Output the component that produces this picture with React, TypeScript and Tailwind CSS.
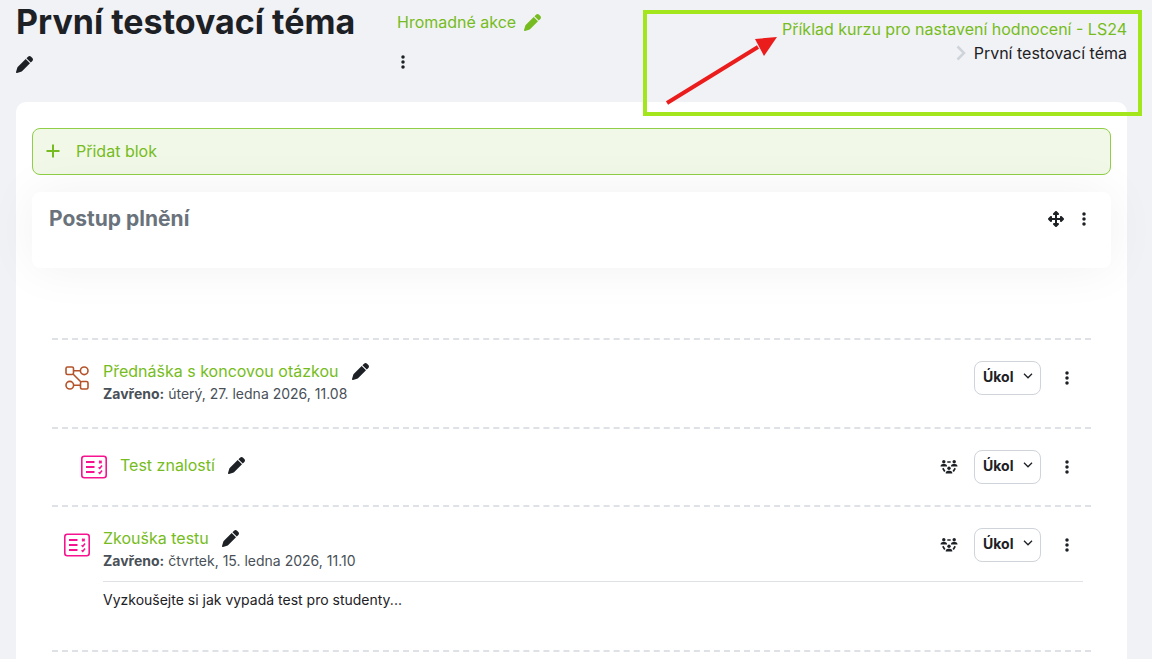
import { useState } from "react";
import {
  FaEllipsisVertical,
  FaPen,
  FaUpDownLeftRight,
} from "react-icons/fa6";

interface Activity {
  id: number;
  kind: "lesson" | "quiz";
  name: string;
  closed?: string;
  description?: string;
  grouped?: boolean;
  indented?: boolean;
}

const activities: Activity[] = [
  {
    id: 1,
    kind: "lesson",
    name: "Přednáška s koncovou otázkou",
    closed: "úterý, 27. ledna 2026, 11.08",
  },
  {
    id: 2,
    kind: "quiz",
    name: "Test znalostí",
    grouped: true,
    indented: true,
  },
  {
    id: 3,
    kind: "quiz",
    name: "Zkouška testu",
    closed: "čtvrtek, 15. ledna 2026, 11.10",
    description: "Vyzkoušejte si jak vypadá test pro studenty...",
    grouped: true,
  },
];

function LessonIcon() {
  return (
    <svg
      viewBox="0 0 24 24"
      className="size-6 text-[#b4532a]"
      fill="none"
      stroke="currentColor"
      strokeWidth="1.6"
    >
      <rect x="1" y="1" width="7.5" height="7.5" rx="1.5" />
      <circle cx="19.2" cy="4.8" r="3.8" />
      <circle cx="4.8" cy="19.2" r="3.8" />
      <rect x="15.5" y="15.5" width="7.5" height="7.5" rx="1.5" />
      <path d="M8.5 4.8h6.9M8.6 19.2h6.9M8 8l8 8" />
    </svg>
  );
}

function QuizIcon() {
  return (
    <svg
      viewBox="0 0 26 24"
      className="h-6 w-[26px] text-[#f7138f]"
      fill="none"
      stroke="currentColor"
      strokeWidth="1.6"
    >
      <rect x="0.8" y="1.2" width="24.4" height="21.6" rx="2.5" />
      <path d="M5 7h8.5M5 12h8.5M5 17h8.5" strokeWidth="1.8" />
      <path d="M18.2 5.8l2.4 2.4M20.6 5.8l-2.4 2.4M17.6 12.2l1.2 1.2 2.2-2.8M17.6 17.2l1.2 1.2 2.2-2.8" />
    </svg>
  );
}

function GroupsIcon() {
  return (
    <svg viewBox="0 0 18 16" className="h-4 w-[18px]" fill="currentColor">
      <circle cx="3.8" cy="2.8" r="1.7" />
      <circle cx="14.2" cy="2.8" r="1.7" />
      <circle cx="9" cy="9.3" r="1.7" />
      <path d="M.5 7.5a2.5 2.5 0 0 1 2.5-2.5h1.6a2.5 2.5 0 0 1 2.5 2.5z" />
      <path d="M10.9 7.5a2.5 2.5 0 0 1 2.5-2.5H15a2.5 2.5 0 0 1 2.5 2.5z" />
      <path d="M5.7 14.5a2.6 2.6 0 0 1 2.6-2.7h1.4a2.6 2.6 0 0 1 2.6 2.7z" />
      <path
        d="M7.3 3h3.4M2.8 9.3l2 3.2M15.2 9.3l-2 3.2"
        fill="none"
        stroke="currentColor"
        strokeWidth="1.7"
      />
    </svg>
  );
}

function ChevronDown() {
  return (
    <svg
      viewBox="0 0 10 6"
      className="pointer-events-none absolute top-3 right-2 h-1.5 w-2.5"
      fill="none"
      stroke="currentColor"
      strokeWidth="1.3"
    >
      <path d="M1 .8l4 4 4-4" />
    </svg>
  );
}

function MenuButton() {
  return (
    <button aria-label="Upravit" className="flex w-3 justify-center">
      <FaEllipsisVertical className="size-4" />
    </button>
  );
}

function ActivityRow({ activity }: { activity: Activity }) {
  const [purpose, setPurpose] = useState("Úkol");

  let bottomSpace = "pb-5";
  if (activity.description) bottomSpace = "pb-10";
  else if (activity.closed) bottomSpace = "pb-[23px]";

  return (
    <li
      className={`border-t-2 border-dashed border-[#dee2e6] pt-5 pr-2 ${
        activity.indented ? "pl-[29px]" : "pl-3"
      } ${bottomSpace}`}
    >
      <div className="flex items-start">
        <div className="flex w-[26px] shrink-0 justify-center pt-1.5">
          {activity.kind === "lesson" ? <LessonIcon /> : <QuizIcon />}
        </div>
        <div className="ml-[13px] flex-1">
          <div
            className={`mb-0.5 flex h-[22px] items-center gap-[13px] ${
              activity.closed ? "" : "mt-[5px]"
            }`}
          >
            <a href="#" className="text-base text-[#76bc21]">
              {activity.name}
            </a>
            <button aria-label="Upravit název">
              <FaPen className="size-[17px]" />
            </button>
          </div>
          {activity.closed && (
            <p className="text-sm text-[#495057]">
              <strong>Zavřeno:</strong> {activity.closed}
            </p>
          )}
        </div>
        <div className="flex h-9 items-center pr-2.5">
          {activity.grouped && (
            <button aria-label="Oddělené skupiny" className="mr-4">
              <GroupsIcon />
            </button>
          )}
          <div className="relative mr-5">
            <select
              aria-label="Kategorie"
              value={purpose}
              onChange={(e) => setPurpose(e.target.value)}
              className="h-[34px] w-[67px] appearance-none rounded-lg border border-[#ced4da] bg-white pb-0.5 pl-2 text-sm font-bold"
            >
              <option>Úkol</option>
            </select>
            <ChevronDown />
          </div>
          <MenuButton />
        </div>
      </div>
      {activity.description && (
        <p className="mt-2.5 ml-[39px] border-t border-[#dee2e6] pt-2 text-sm">
          {activity.description}
        </p>
      )}
    </li>
  );
}

export default function App() {
  return (
    <div className="relative min-h-screen overflow-hidden bg-[#f1f2f6] pr-[25px] pl-4 font-['Inter',sans-serif] text-[#1d2125]">
      <header className="flex h-[102px] items-start">
        <div className="w-[381px] shrink-0 pt-0.5">
          <h1 className="text-[34px] leading-10 font-bold whitespace-nowrap">
            První testovací téma
          </h1>
          <button aria-label="Upravit název tématu" className="mt-3.5 block">
            <FaPen className="size-[17px]" />
          </button>
        </div>
        <div className="pt-2.5">
          <a href="#" className="flex items-center gap-2 text-[#76bc21]">
            Hromadné akce
            <FaPen className="size-[17px]" />
          </a>
          <div className="mt-5">
            <MenuButton />
          </div>
        </div>
        <nav
          aria-label="Drobečková navigace"
          className="ml-auto flex flex-col items-end pt-[17px] text-base"
        >
          <a href="#" className="text-[#76bc21]">
            Příklad kurzu pro nastavení hodnocení - LS24
          </a>
          <span className="flex items-center gap-2">
            <svg
              viewBox="0 0 10 16"
              className="h-4 w-2.5 text-[#ced4da]"
              fill="none"
              stroke="currentColor"
              strokeWidth="2.5"
            >
              <path d="M1.5 1.5L8 8l-6.5 6.5" />
            </svg>
            První testovací téma
          </span>
        </nav>
      </header>

      <main className="min-h-[580px] rounded-t-[10px] bg-white px-4 pt-[26px]">
        <button className="flex h-[47px] w-full items-center rounded-lg border border-[#8fce46] bg-[#f1f8e8] pb-0.5 pl-[13px] text-[#76bc21]">
          <svg
            viewBox="0 0 14 14"
            className="mr-4 size-3.5"
            stroke="currentColor"
            strokeWidth="2"
          >
            <path d="M7 .5v13M.5 7h13" />
          </svg>
          Přidat blok
        </button>

        <section className="mt-[17px] flex h-[76px] items-start justify-between rounded-lg bg-white px-[17px] pt-[11px] shadow-[0_0_50px_rgba(0,0,0,0.06)]">
          <h2 className="text-[21px] leading-8 font-bold text-[#6a737b]">
            Postup plnění
          </h2>
          <div className="flex h-8 items-center gap-3.5 pr-1">
            <button aria-label="Přesunout blok">
              <FaUpDownLeftRight className="size-4" />
            </button>
            <MenuButton />
          </div>
        </section>

        <ul className="mx-5 mt-[70px] border-b-2 border-dashed border-[#dee2e6]">
          {activities.map((activity) => (
            <ActivityRow key={activity.id} activity={activity} />
          ))}
        </ul>
      </main>

      {/* Highlight around the breadcrumbs */}
      <div className="pointer-events-none absolute top-2.5 right-2.5 h-[106px] w-[499px] border-4 border-[#a2e61b]">
        <svg viewBox="0 0 491 98" className="h-full w-full" fill="#eb1c1c">
          <path d="M20 89L111 33" stroke="#eb1c1c" strokeWidth="4" />
          <path d="M130 23L108 25l9 17z" />
        </svg>
      </div>
    </div>
  );
}
